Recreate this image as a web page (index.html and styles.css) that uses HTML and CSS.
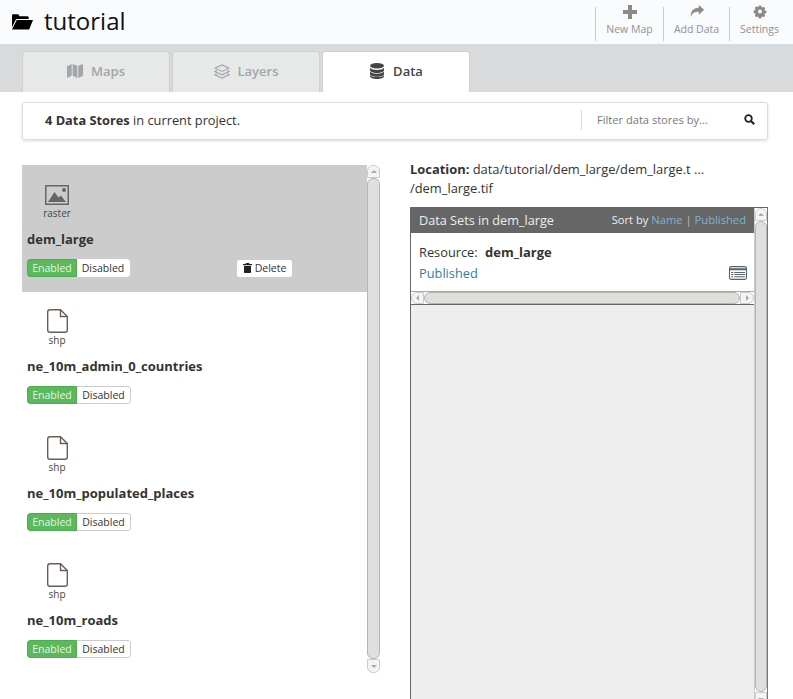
FILE: index.html
```html
<!DOCTYPE html>
<html lang="en">
<head>
  <meta charset="UTF-8" />
  <title>tutorial - Data</title>
  <link rel="stylesheet" href="styles.css">
</head>
<body>

<header class="topbar">
  <h1 class="project">
    <svg class="project-icon" viewBox="0 0 22 17"><path d="M0 2.500C0 1.500.7 1 1.500 1h5l1.500 2H16c.8 0 1.500.6 1.500 1.500V6H6C4.800 6 4 6.500 3.500 7.500L0 14.500z"/><path d="M5 7H22l-4 10H0z"/></svg>
    tutorial
  </h1>
  <nav class="actions">
    <a class="action">
      <svg class="action-icon" viewBox="0 0 16 16"><path d="M6 1h4v5h5v4h-5v5H6v-5H1V6h5z"/></svg>
      New Map
    </a>
    <a class="action">
      <svg class="action-icon" viewBox="-1 -1 18 18"><path d="M10 0l6 5.500-6 5.500V7.800C5.500 7.800 2.500 9 1 14 .5 7.500 3.500 3.500 10 3.200z"/></svg>
      Add Data
    </a>
    <a class="action">
      <svg class="action-icon" viewBox="-2 -1 20 20"><path fill-rule="evenodd" d="M6.600 1h2.800l.4 1.900 1.200.5 1.600-1 2 2-1 1.600.5 1.200 1.900.4v2.800l-1.900.4-.5 1.200 1 1.600-2 2-1.600-1-1.200.5-.4 1.900H6.600l-.4-1.900-1.200-.5-1.600 1-2-2 1-1.600-.5-1.200L0 9.900V7.100l1.900-.4.5-1.200-1-1.600 2-2 1.600 1 1.200-.5zM8 6a2.500 2.500 0 1 0 0 5 2.500 2.500 0 0 0 0-5z"/></svg>
      Settings
    </a>
  </nav>
</header>

<div class="tabs">
  <a class="tab">
    <svg class="tab-icon" viewBox="0 0 17 15" fill="currentColor"><path d="M0 2.500L5 0v12.500L0 15zM6 0l5 2v13l-5-2.500zM12 2l5-2v12.500L12 15z"/></svg>
    Maps
  </a>
  <a class="tab">
    <svg class="tab-icon" viewBox="0 0 17 15" fill="none" stroke="currentColor" stroke-width="1.200"><path d="M8.500 1L16 4.500 8.500 8 1 4.500z"/><path d="M3 7L1 8l7.500 3.500L16 8l-2-1"/><path d="M3 10.500l-2 1L8.500 15l7.500-3.500-2-1"/></svg>
    Layers
  </a>
  <a class="tab tab-active">
    <svg class="tab-icon" viewBox="0 0 15 16" fill="currentColor"><ellipse cx="7.500" cy="2.800" rx="7" ry="2.800"/><path d="M.5 4.800C1.500 6.500 4.500 7 7.500 7s6-.5 7-2.200v2.400c0 1.500-3 2.800-7 2.800s-7-1.300-7-2.800z"/><path d="M.5 8.500c1 1.700 4 2.200 7 2.200s6-.5 7-2.200v2.400c0 1.500-3 2.800-7 2.800s-7-1.300-7-2.800z"/><path d="M.5 12c1 1.700 4 2 7 2s6-.3 7-2v1.200c0 1.500-3 2.800-7 2.800s-7-1.300-7-2.800z"/></svg>
    Data
  </a>
</div>

<main class="content">
  <div class="summary">
    <p class="summary-text"><b>4 Data Stores</b> in current project.</p>
    <div class="filter">
      <span class="filter-text">Filter data stores by...</span>
      <svg class="filter-icon" viewBox="0 0 11 11" fill="none" stroke="currentColor"><circle cx="4.500" cy="4.500" r="3.300" stroke-width="1.800"/><path d="M7 7l3.200 3.200" stroke-width="2.200"/></svg>
    </div>
  </div>

  <div class="columns">
    <section class="stores">
      <ul class="store-list">
        <li class="store store-selected">
          <svg class="store-icon raster-icon" viewBox="0 0 24 20"><path fill="none" stroke="#666" stroke-width="1.500" d="M.75.75h22.500v18.500H.75z"/><path fill="#666" d="M3 17l6.500-10 4 5.500 2.500-2 5 6.500z"/><circle fill="#666" cx="19" cy="5" r="2"/></svg>
          <span class="store-type">raster</span>
          <h3 class="store-name">dem_large</h3>
          <div class="store-controls">
            <div class="toggle"><span class="toggle-on">Enabled</span><span class="toggle-off">Disabled</span></div>
            <a class="delete">
              <svg class="delete-icon" viewBox="0 0 9 10"><path d="M3 0h3l.5 1H9v1.200H0V1h2.500zM1 3h7v6c0 .6-.4 1-1 1H2c-.6 0-1-.4-1-1z"/></svg>
              Delete
            </a>
          </div>
        </li>
        <li class="store">
          <svg class="store-icon file-icon" viewBox="0 0 21 24"><path fill="#fff" stroke="#6b5d55" stroke-width="1.400" d="M3 .7h10.500l6.800 6.800V21c0 1.300-1 2.300-2.300 2.300H3C1.700 23.300.7 22.300.7 21V3C.7 1.700 1.700.7 3 .7z"/><path fill="none" stroke="#6b5d55" stroke-width="1.400" d="M13.500.7v6.800h6.800"/></svg>
          <span class="store-type">shp</span>
          <h3 class="store-name">ne_10m_admin_0_countries</h3>
          <div class="store-controls">
            <div class="toggle"><span class="toggle-on">Enabled</span><span class="toggle-off">Disabled</span></div>
          </div>
        </li>
        <li class="store">
          <svg class="store-icon file-icon" viewBox="0 0 21 24"><path fill="#fff" stroke="#6b5d55" stroke-width="1.400" d="M3 .7h10.500l6.800 6.800V21c0 1.300-1 2.300-2.300 2.300H3C1.700 23.300.7 22.300.7 21V3C.7 1.700 1.700.7 3 .7z"/><path fill="none" stroke="#6b5d55" stroke-width="1.400" d="M13.500.7v6.800h6.800"/></svg>
          <span class="store-type">shp</span>
          <h3 class="store-name">ne_10m_populated_places</h3>
          <div class="store-controls">
            <div class="toggle"><span class="toggle-on">Enabled</span><span class="toggle-off">Disabled</span></div>
          </div>
        </li>
        <li class="store">
          <svg class="store-icon file-icon" viewBox="0 0 21 24"><path fill="#fff" stroke="#6b5d55" stroke-width="1.400" d="M3 .7h10.500l6.800 6.800V21c0 1.300-1 2.300-2.300 2.300H3C1.700 23.300.7 22.300.7 21V3C.7 1.700 1.700.7 3 .7z"/><path fill="none" stroke="#6b5d55" stroke-width="1.400" d="M13.500.7v6.800h6.800"/></svg>
          <span class="store-type">shp</span>
          <h3 class="store-name">ne_10m_roads</h3>
          <div class="store-controls">
            <div class="toggle"><span class="toggle-on">Enabled</span><span class="toggle-off">Disabled</span></div>
          </div>
        </li>
      </ul>
      <div class="vscroll">
        <span class="sb-btn sb-top"><i class="arrow arrow-up"></i></span>
        <span class="sb-thumb"></span>
        <span class="sb-btn sb-bottom"><i class="arrow arrow-down"></i></span>
      </div>
    </section>

    <section class="details">
      <p class="location"><b>Location:</b> data/tutorial/dem_large/dem_large.t ...<br>/dem_large.tif</p>
      <div class="datasets">
        <div class="datasets-main">
          <div class="datasets-head">
            <span>Data Sets in dem_large</span>
            <span class="sort">Sort by <a class="sort-link">Name</a> <span class="sort-sep">|</span> <a class="sort-link">Published</a></span>
          </div>
          <div class="resource">
            <p class="resource-name">Resource: <b>dem_large</b></p>
            <div class="resource-row">
              <a class="published">Published</a>
              <svg class="table-icon" viewBox="0 0 17 13"><rect x=".5" y=".5" width="16" height="12" rx="1.500" fill="#fff" stroke="#56626c"/><path fill="#56626c" d="M.5 2h16v2H.5zM2 5.500h2v1H2zM5 5.500h10v1H5zM2 7.500h2v1H2zM5 7.500h10v1H5zM2 9.500h2v1H2zM5 9.500h10v1H5z"/></svg>
            </div>
          </div>
          <div class="hscroll">
            <span class="sb-btn sb-left"><i class="arrow arrow-left"></i></span>
            <span class="sb-thumb"></span>
            <span class="sb-btn sb-right"><i class="arrow arrow-right"></i></span>
          </div>
          <div class="datasets-empty"></div>
        </div>
        <div class="vscroll vscroll-inner">
          <span class="sb-btn sb-top"><i class="arrow arrow-up"></i></span>
          <span class="sb-thumb"></span>
          <span class="sb-btn sb-bottom"><i class="arrow arrow-down"></i></span>
        </div>
      </div>
    </section>
  </div>
</main>

</body>
</html>
```

FILE: styles.css
```css
* {
  box-sizing: border-box;
}

html, body {
  height: 699px;
  overflow: hidden;
}

body {
  margin: 0;
  font-family: "Open Sans", sans-serif;
  font-size: 12.800px;
  color: #333;
  background-color: #fff;
}

p, h1, h3, ul {
  margin: 0;
  padding: 0;
}

b {
  font-weight: 700;
}

/* top bar */
.topbar {
  height: 45px;
  padding: 0 0 0 12px;
  display: flex;
  justify-content: space-between;
  background-color: #fafbfd;
  border-bottom: 1px solid #cfdde3;
}

.project {
  display: flex;
  align-items: center;
  gap: 11px;
  font-size: 24px;
  font-weight: 400;
  color: #111;
  height: 40px;
}

.project-icon {
  width: 21px;
  height: 17px;
  margin-top: 3px;
  fill: #000;
}

.actions {
  display: flex;
  padding-top: 7px;
  padding-right: 4px;
}

.action {
  height: 34px;
  display: flex;
  flex-direction: column;
  align-items: center;
  font-size: 10.500px;
  line-height: 14px;
  color: #8d9296;
  border-left: 1px solid #ccc;
}

.action:nth-child(1) {
  width: 68px;
}

.action:nth-child(2) {
  width: 66px;
}

.action:nth-child(3) {
  width: 60px;
}

.action-icon {
  width: 16px;
  height: 16px;
  margin: -3px 0 2px;
  flex-shrink: 0;
  fill: #8a8a8a;
}

/* tabs */
.tabs {
  height: 47px;
  padding: 6px 0 0 22px;
  display: flex;
  gap: 2px;
  background-color: #d9dadb;
}

.tab {
  width: 148px;
  padding-bottom: 2px;
  display: flex;
  align-items: center;
  justify-content: center;
  gap: 8px;
  font-size: 13px;
  font-weight: 600;
  color: #a3a6a9;
  background-color: #e7e8e8;
  border: 1px solid #d0d0d0;
  border-bottom: none;
  border-radius: 4px 4px 0 0;
}

.tab-icon {
  width: 16px;
  height: 16px;
}

.tab-active {
  color: #444;
  background-color: #fff;
}

/* summary bar */
.content {
  padding: 10px 25px 0 22px;
}

.summary {
  height: 38px;
  padding-bottom: 3px;
  display: flex;
  align-items: center;
  justify-content: space-between;
  border: 1px solid #ddd;
  border-radius: 3px;
  box-shadow: 0 1px 3px rgba(0, 0, 0, 0.15);
}

.summary-text {
  padding-left: 22px;
}

.filter {
  width: 186px;
  height: 20px;
  padding: 0 12px 0 15px;
  display: flex;
  align-items: center;
  justify-content: space-between;
  border-left: 1px solid #ddd;
}

.filter-text {
  font-size: 11.100px;
  color: #777;
}

.filter-icon {
  width: 11px;
  height: 11px;
  color: #222;
}

/* two columns */
.columns {
  margin-top: 25px;
  display: flex;
}

.stores {
  width: 358px;
  height: 508px;
  flex-shrink: 0;
  display: flex;
}

.store-list {
  width: 345px;
  list-style: none;
}

.store {
  height: 127px;
  padding: 20px 0 0 5px;
  display: flex;
  flex-direction: column;
}

.store-selected {
  background-color: #ccc;
}

.store-icon {
  display: block;
  margin-left: 18px;
}

.raster-icon {
  width: 24px;
  height: 20px;
  margin-bottom: 1px;
}

.file-icon {
  width: 21px;
  height: 24px;
  margin-left: 20px;
  margin-top: -3px;
}

.store-type {
  width: 60px;
  font-size: 10px;
  line-height: 14px;
  text-align: center;
  color: #444;
}

.store-name {
  margin-top: 10px;
  font-size: 13px;
  line-height: 18px;
  font-weight: 700;
}

.store-controls {
  margin-top: 11px;
  display: flex;
  align-items: center;
}

.toggle {
  display: flex;
  font-size: 10.500px;
  line-height: 16px;
  border-radius: 3px;
  overflow: hidden;
}

.toggle-on {
  width: 50px;
  height: 18px;
  text-align: center;
  color: #e4f4e4;
  background-color: #5cb85c;
  border: 1px solid #4cae4c;
  border-radius: 3px 0 0 3px;
}

.toggle-off {
  width: 54px;
  height: 18px;
  text-align: center;
  color: #333;
  background-color: #fff;
  border: 1px solid #ccc;
  border-left: none;
  border-radius: 0 3px 3px 0;
}

.store-selected .toggle-off {
  width: 53px;
  border-color: #fff;
}

.delete {
  width: 55px;
  height: 17px;
  margin-left: 107px;
  display: flex;
  align-items: center;
  justify-content: center;
  gap: 3px;
  font-size: 10.500px;
  color: #333;
  background-color: #fff;
  border-radius: 2px;
}

.delete-icon {
  width: 9px;
  height: 10px;
  fill: #222;
}

/* scrollbars */
.vscroll {
  width: 13px;
  display: flex;
  flex-direction: column;
  background-color: #fff;
}

.hscroll {
  height: 14px;
  flex-shrink: 0;
  display: flex;
  background-color: #fff;
  border-top: 1px solid #aaa;
  border-bottom: 1px solid #666;
}

.sb-btn {
  flex: 0 0 14px;
  display: flex;
  align-items: center;
  justify-content: center;
  background-color: #f4f4f3;
  border: 1px solid #ccc;
}

.sb-top {
  flex-basis: 13px;
  border-radius: 6px 6px 0 0;
}

.sb-bottom {
  border-radius: 0 0 6px 6px;
}

.sb-left {
  flex-basis: 13px;
  border-radius: 6px 0 0 6px;
}

.sb-right {
  border-radius: 0 6px 6px 0;
}

.sb-thumb {
  flex: 1;
  background-color: #dfdfdd;
  border: 1px solid #b5b5b0;
  border-radius: 6px;
}

.arrow {
  width: 0;
  height: 0;
  border: 3px solid transparent;
}

.arrow-up {
  border-top: none;
  border-bottom-color: #aaa;
}

.arrow-down {
  border-bottom: none;
  border-top-color: #aaa;
}

.arrow-left {
  border-left: none;
  border-right-color: #aaa;
}

.arrow-right {
  border-right: none;
  border-left-color: #aaa;
}

/* data sets panel */
.details {
  width: 358px;
  margin-left: 30px;
  margin-top: -5px;
  flex-shrink: 0;
}

.location {
  margin-bottom: 9px;
  font-size: 12.900px;
  line-height: 19px;
  height: 38px;
}

.datasets {
  height: 500px;
  display: flex;
  border: 1px solid #666;
  border-right-color: #777;
}

.datasets-main {
  flex: 1;
  min-width: 0;
  display: flex;
  flex-direction: column;
}

.datasets-head {
  height: 25px;
  padding: 0 8px 2px;
  flex-shrink: 0;
  display: flex;
  align-items: center;
  justify-content: space-between;
  font-size: 12.700px;
  color: #eee;
  background-color: #666;
}

.sort {
  font-size: 11.200px;
}

.sort-link {
  color: #7fb2d0;
}

.sort-sep {
  color: #bbb;
}

.resource {
  height: 58px;
  flex-shrink: 0;
  padding: 10px 7px 0 8px;
}

.resource-name {
  line-height: 19px;
}

.resource-name b {
  margin-left: 4px;
  font-size: 13px;
}

.resource-row {
  margin-top: 1px;
  display: flex;
  align-items: center;
  justify-content: space-between;
}

.published {
  color: #337d9e;
  line-height: 20px;
}

.table-icon {
  width: 18px;
  height: 14px;
}

.datasets-empty {
  flex: 1;
  background-color: #eee;
}

.vscroll-inner {
  border-left: 1px solid #ccc;
}
```
